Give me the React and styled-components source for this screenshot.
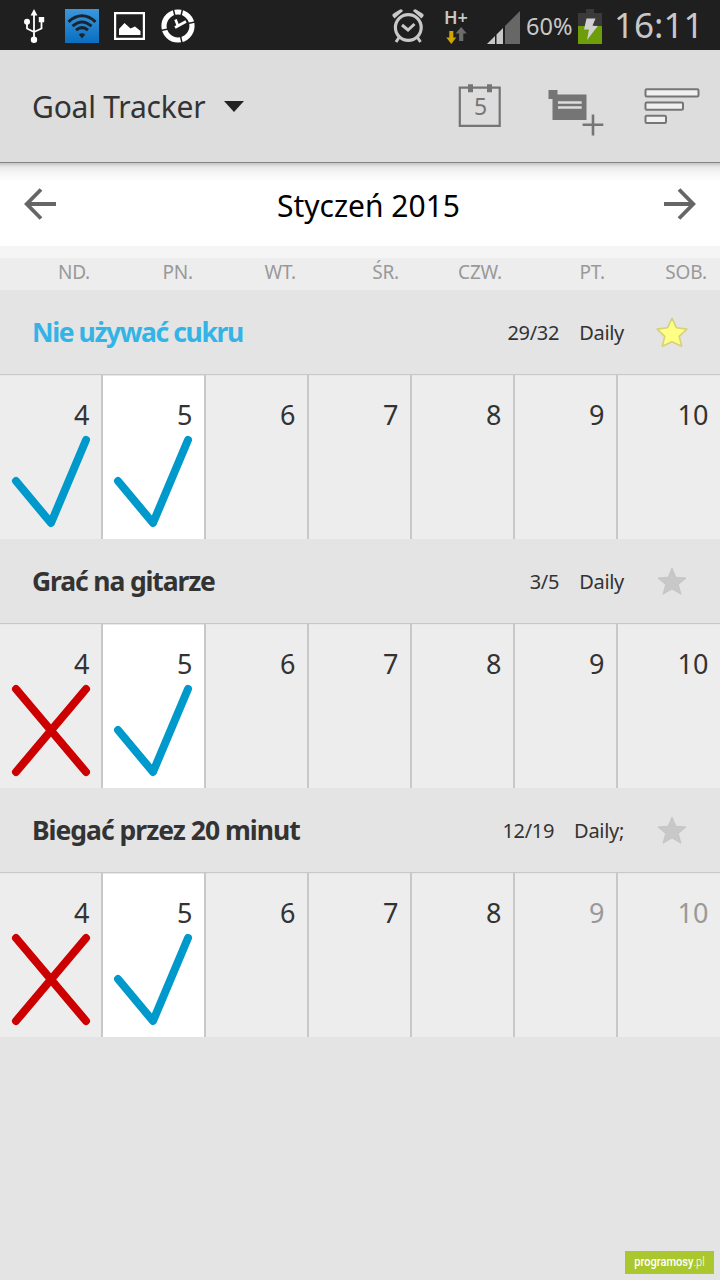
import React from 'react';
import styled, { createGlobalStyle } from 'styled-components';

const WEEKDAYS = ['ND.', 'PN.', 'WT.', 'ŚR.', 'CZW.', 'PT.', 'SOB.'];
const DAYS = [4, 5, 6, 7, 8, 9, 10];
const TODAY = 5;

const GOALS = [
  {
    name: 'Nie używać cukru',
    spacing: '-1.4px',
    score: '29/32',
    repeat: 'Daily',
    starred: true,
    marks: { 4: 'done', 5: 'done' },
    inactive: [],
  },
  {
    name: 'Grać na gitarze',
    spacing: '-1.13px',
    score: '3/5',
    repeat: 'Daily',
    starred: false,
    marks: { 4: 'missed', 5: 'done' },
    inactive: [],
  },
  {
    name: 'Biegać przez 20 minut',
    spacing: '-1px',
    score: '12/19',
    repeat: 'Daily;',
    starred: false,
    marks: { 4: 'missed', 5: 'done' },
    inactive: [9, 10],
  },
];

const UsbIcon = () => (
  <svg width="22" height="36" viewBox="0 0 22 36">
    <g fill="none" stroke="#fff" strokeWidth="1.8">
      <path d="M11 6v26M4 14v6.500l7 3.500M18.500 12v8.500l-7.500 3.500" />
    </g>
    <path fill="#fff" d="M11 1l3.400 6.500H7.600z" />
    <circle cx="4" cy="13.800" r="3" fill="#fff" />
    <path fill="#fff" d="M15.800 9h5.400v5.200h-5.400z" />
    <circle cx="11" cy="31.700" r="3.200" fill="#fff" />
  </svg>
);

const WifiIcon = () => (
  <svg width="34" height="34" viewBox="0 0 34 34">
    <defs>
      <linearGradient id="wifi" x1="0" y1="0" x2="0" y2="1">
        <stop offset="0" stopColor="#3b97dd" />
        <stop offset="1" stopColor="#0a6fc0" />
      </linearGradient>
    </defs>
    <path fill="url(#wifi)" d="M0 0h34v34H0z" />
    <g fill="none" stroke="#1b242d" strokeWidth="3">
      <path d="M3.500 12.800q13.500-12 27 0" />
      <path d="M7.500 17.200q9.500-8.500 19 0" />
      <path d="M11 21.200q6-5.200 12 0" />
    </g>
    <path fill="#1b242d" d="M13.800 25.500q3.200-2.400 6.400 0L17 29.500z" />
  </svg>
);

const PictureIcon = () => (
  <svg width="31" height="28" viewBox="0 0 31 28">
    <path fill="none" stroke="#fff" strokeWidth="2.200" d="M1.100 1.100h28.800v25.800H1.100z" />
    <path fill="#fff" d="M5 23v-6l5.500-6 6 5.500 4.500-2 5.500 4.500V23z" />
  </svg>
);

const DialIcon = () => (
  <svg width="34" height="34" viewBox="0 0 34 34">
    <circle cx="17" cy="17" r="14" fill="none" stroke="#fff" strokeWidth="5.200" />
    <path
      d="M12.300 0l1.700 7M21.500 0l-1.500 7M0 21.500l7-1.500M34 13l-7 1.500M19.500 27l1.500 7"
      stroke="#1f1f1f"
      strokeWidth="1.500"
    />
    <path fill="none" stroke="#fff" strokeWidth="2.600" d="M14.500 10.500l2.500 6.500M14 18.500l11-6" />
  </svg>
);

const AlarmIcon = () => (
  <svg width="32" height="34" viewBox="0 0 32 34">
    <circle cx="16.300" cy="18.500" r="12.900" fill="none" stroke="#c8c8c8" strokeWidth="3.200" />
    <path fill="none" stroke="#c8c8c8" strokeWidth="3" d="M10 16l6 5 6.500-6M7 28.500L4 33M25.500 28.500l3 4.500" />
    <path fill="#c8c8c8" d="M.500 7q-.500-1.500 1-2.500L8 .500q2-.800 3 1.500L2.500 9.500zM31.500 7q.500-1.500-1-2.500L24 .500q-2-.800-3 1.500l8.500 7.500z" />
  </svg>
);

const TransferArrows = () => (
  <svg width="22" height="18" viewBox="0 0 22 18">
    <path fill="#cfa500" d="M4.300 4h4v6.500h2.900L6.300 17 1.300 10.500h3z" />
    <path fill="#6c6c6c" d="M16.200 0l5.600 6.500h-3.500V14h-4.200V6.500h-3.500z" />
  </svg>
);

const SignalIcon = () => (
  <svg width="33" height="33" viewBox="0 0 33 33">
    <path fill="#c8c8c8" d="M0 33l8-8v8zM9.500 23.500l6.500-6.500v16H9.500z" />
    <path fill="#676767" d="M18 15L33 0v33H18z" />
  </svg>
);

const BatteryIcon = () => (
  <svg width="24" height="35" viewBox="0 0 24 35">
    <path fill="#3a3a3a" d="M8 0h8v4h8v13H0V4h8z" />
    <path fill="#6d9e0a" d="M0 17h24v18H0z" />
    <path fill="#d2d2d2" d="M8.500 9.500h9l-3 7.300 5.300.2L9 31l2-10.500H6z" />
  </svg>
);

const CalendarIcon = () => (
  <svg width="44" height="44" viewBox="0 0 44 44">
    <path fill="none" stroke="#757575" strokeWidth="2.200" d="M1.800 3.600h39.900v38.300H1.800z" />
    <path fill="#757575" d="M10 .300h5v8h-5zM29 .300h5v8h-5z" />
    <text x="22.500" y="30.500" textAnchor="middle" fontFamily="'Noto Sans', sans-serif" fontSize="23" fill="#757575">5</text>
  </svg>
);

const AddGoalIcon = () => (
  <svg width="56" height="46" viewBox="0 0 56 46">
    <path fill="#757575" d="M.500 0H9.500v4.500h29v25.500h-34V9h-4z" />
    <path fill="#ddd" d="M10 11.200h23.700v2.500H10zM10 16.200h23.700v2.500H10z" />
    <path fill="none" stroke="#757575" strokeWidth="2.600" d="M34.600 34.800h20.700M45 24.500v21" />
  </svg>
);

const SortIcon = () => (
  <svg width="56" height="36" viewBox="0 0 56 36">
    <g fill="#f0f0f0" stroke="#757575" strokeWidth="2">
      <rect x="1.500" y="1.300" width="53" height="7.200" rx="1.200" />
      <rect x="1.500" y="14.500" width="37.500" height="7.200" rx="1.200" />
      <rect x="1.500" y="27.700" width="20.500" height="7.200" rx="1.200" />
    </g>
  </svg>
);

const ArrowIcon = ({ flip }) => (
  <svg width="32" height="32" viewBox="0 0 32 32">
    <path
      fill="none"
      stroke="#666"
      strokeWidth="3.800"
      d={flip ? 'M0 16h29M15 1.500L29.300 16 15 30.500' : 'M32 16H3M17 1.500L2.700 16 17 30.500'}
    />
  </svg>
);

const StarIcon = ({ on }) => (
  <svg width="32" height="32" viewBox="0 0 32 32">
    <path
      fill={on ? '#ffff85' : '#c8c8c8'}
      stroke={on ? '#d6d277' : '#c0c0c0'}
      strokeWidth={on ? 1.6 : 0.8}
      strokeLinejoin="round"
      d={
        on
          ? 'M16 2.300l4.400 9.400 10.500 1.400-7.700 7.200 2.500 9.900L16 25.700 6.300 30.200l2.500-9.900-7.700-7.200 10.500-1.400z'
          : 'M16 3l3.800 9.200 10.200.8-7.700 6.500 2.700 9.700L16 24l-9 5.200 2.700-9.700L2 13l10.200-.8z'
      }
    />
  </svg>
);

const Mark = ({ type }) => (
  <svg width="101" height="100" viewBox="0 0 101 100">
    {type === 'done' && (
      <path fill="none" stroke="#09c" strokeWidth="8" strokeLinecap="round" strokeLinejoin="round" d="M16 37l35 42 35-83" />
    )}
    {type === 'missed' && (
      <path fill="none" stroke="#c00" strokeWidth="8" strokeLinecap="round" d="M16 -4l70 83M86 -4L16 79" />
    )}
  </svg>
);

const Goal = ({ goal }) => (
  <section>
    <GoalHeader>
      <GoalName $highlight={goal.starred} $spacing={goal.spacing}>{goal.name}</GoalName>
      <GoalMeta>{goal.score}</GoalMeta>
      <GoalMeta>{goal.repeat}</GoalMeta>
      <StarIcon on={goal.starred} />
    </GoalHeader>
    <Days>
      {DAYS.map(day => (
        <Day key={day} $today={day === TODAY}>
          <DayNumber $muted={goal.inactive.includes(day)}>{day}</DayNumber>
          {goal.marks[day] && <Mark type={goal.marks[day]} />}
        </Day>
      ))}
    </Days>
  </section>
);

const App = () => (
  <Screen>
    <GlobalStyle />
    <StatusBar>
      <Notifications>
        <UsbIcon />
        <WifiIcon />
        <PictureIcon />
        <DialIcon />
      </Notifications>
      <SystemInfo>
        <AlarmIcon />
        <Network>
          <span>H+</span>
          <TransferArrows />
        </Network>
        <SignalIcon />
        <BatteryText>60%</BatteryText>
        <BatteryIcon />
        <Clock>16:11</Clock>
      </SystemInfo>
    </StatusBar>
    <ActionBar>
      <AppTitle>Goal Tracker</AppTitle>
      <Caret />
      <Actions>
        <CalendarIcon />
        <AddGoalIcon />
        <SortIcon />
      </Actions>
    </ActionBar>
    <MonthBar>
      <ArrowIcon />
      <Month>Styczeń 2015</Month>
      <ArrowIcon flip />
    </MonthBar>
    <Weekdays>
      {WEEKDAYS.map(day => <Weekday key={day}>{day}</Weekday>)}
    </Weekdays>
    {GOALS.map(goal => <Goal key={goal.name} goal={goal} />)}
    <Footer>
      <Badge><span>programosy<i>.pl</i></span></Badge>
    </Footer>
  </Screen>
);

export default App;

const GlobalStyle = createGlobalStyle`
  body {
    margin: 0;
  }
  * {
    box-sizing: border-box;
  }
  svg {
    display: block;
    flex: none;
  }
`;

const Screen = styled.div`
  background: #e4e4e4;
  color: #333;
  display: flex;
  flex-direction: column;
  font-family: 'Noto Sans', sans-serif;
  height: 1280px;
  overflow: hidden;
  white-space: nowrap;
  width: 720px;
`;

const StatusBar = styled.header`
  background: #1f1f1f;
  color: #c8c8c8;
  display: flex;
  height: 50px;
  justify-content: space-between;
`;

const Notifications = styled.div`
  align-items: center;
  display: flex;
  padding: 2px 0 0 23px;
  > :nth-child(2) {
    margin-left: 20px;
  }
  > :nth-child(3) {
    margin-left: 15px;
  }
  > :nth-child(4) {
    margin-left: 16px;
  }
`;

const SystemInfo = styled.div`
  align-items: flex-start;
  display: flex;
  width: 328px;
  > svg:nth-child(1) {
    margin-top: 9px;
  }
  > svg:nth-child(3) {
    margin: 11px 0 0 19px;
  }
  > svg:nth-child(5) {
    margin-top: 9px;
  }
`;

const Network = styled.div`
  display: flex;
  flex-direction: column;
  font-size: 18px;
  font-weight: 600;
  line-height: 22px;
  margin-left: 20px;
  padding-top: 6px;
  width: 24px;
  svg {
    margin: -1px 0 0 1px;
  }
`;

const BatteryText = styled.span`
  font-size: 23.500px;
  line-height: 53px;
  margin-left: 6px;
  width: 52px;
`;

const Clock = styled.span`
  font-size: 35px;
  line-height: 49px;
  margin-left: 12px;
`;

const ActionBar = styled.div`
  align-items: center;
  background: #ddd;
  border-bottom: 1px solid #858585;
  display: flex;
  height: 113px;
  padding: 0 20px 0 32px;
`;

const AppTitle = styled.h1`
  font-size: 30px;
  font-weight: 400;
  letter-spacing: -0.2px;
  line-height: 40px;
  margin: 2px 0 0;
  width: 192px;
`;

const Caret = styled.span`
  border: 10px solid transparent;
  border-bottom: 0;
  border-top: 11px solid #222;
`;

const Actions = styled.div`
  display: flex;
  flex: 1;
  justify-content: flex-end;
  padding-top: 8px;
  > :nth-child(2) {
    margin: 6px 0 0 46px;
  }
  > :nth-child(3) {
    margin: 4px 0 0 40px;
  }
`;

const MonthBar = styled.div`
  align-items: center;
  background: linear-gradient(#c4c4c4, #e9e9e9 4px, #f6f6f6 10px, #fff 19px);
  display: flex;
  height: 83px;
  justify-content: space-between;
  padding: 0 24px 2px;
`;

const Month = styled.h2`
  color: #000;
  font-size: 30px;
  font-weight: 400;
  line-height: 40px;
  margin: 0;
  padding: 4px 0 0 17px;
`;

const Weekdays = styled.div`
  background: #ededed;
  border-top: 12px solid #f5f5f5;
  display: grid;
  grid-template-columns: repeat(6, 103px) 102px;
  height: 44px;
`;

const Weekday = styled.div`
  color: #999;
  font-size: 19px;
  letter-spacing: -0.2px;
  line-height: 28px;
  padding-right: 13px;
  text-align: right;
`;

const GoalHeader = styled.div`
  align-items: center;
  border-bottom: 1px solid #c8c8c8;
  display: flex;
  height: 85px;
  padding: 0 32px;
  svg {
    margin-left: 32px;
  }
`;

const GoalName = styled.h3`
  color: ${props => (props.$highlight ? '#34b4e6' : '#333')};
  flex: 1;
  font-size: 26.5px;
  font-weight: 700;
  letter-spacing: ${props => props.$spacing};
  line-height: 36px;
  margin: 0;
`;

const GoalMeta = styled.span`
  font-size: 20px;
  letter-spacing: -0.3px;
  margin-left: 20px;
`;

const Days = styled.div`
  display: grid;
  grid-template-columns: repeat(6, 103px) 102px;
  height: 164px;
`;

const Day = styled.div`
  background: ${props => (props.$today ? '#fff' : '#ededed')};
  border-right: 2px solid #c8c8c8;
  box-shadow: inset 0 1px #e8e8e8;
  height: 164px;
  overflow: hidden;
  &:last-child {
    border-right: 0;
  }
  svg {
    margin-left: ${props => (props.$today ? '-1px' : '0')};
    overflow: visible;
  }
`;

const DayNumber = styled.div`
  color: ${props => (props.$muted ? '#999' : '#333')};
  font-size: 27px;
  height: 69px;
  line-height: 79px;
  padding-right: 11.5px;
  text-align: right;
`;

const Footer = styled.footer`
  align-items: flex-end;
  display: flex;
  flex: 1;
  justify-content: flex-end;
  padding: 0 6px 6px 0;
`;

const Badge = styled.div`
  background: #aac72e;
  color: #fff;
  display: flex;
  font-family: Roboto, sans-serif;
  font-size: 13px;
  font-weight: 500;
  height: 23px;
  justify-content: center;
  line-height: 22px;
  width: 89px;
  span {
    transform: scaleX(0.85);
  }
  i {
    font-style: normal;
    font-weight: 300;
  }
`;
